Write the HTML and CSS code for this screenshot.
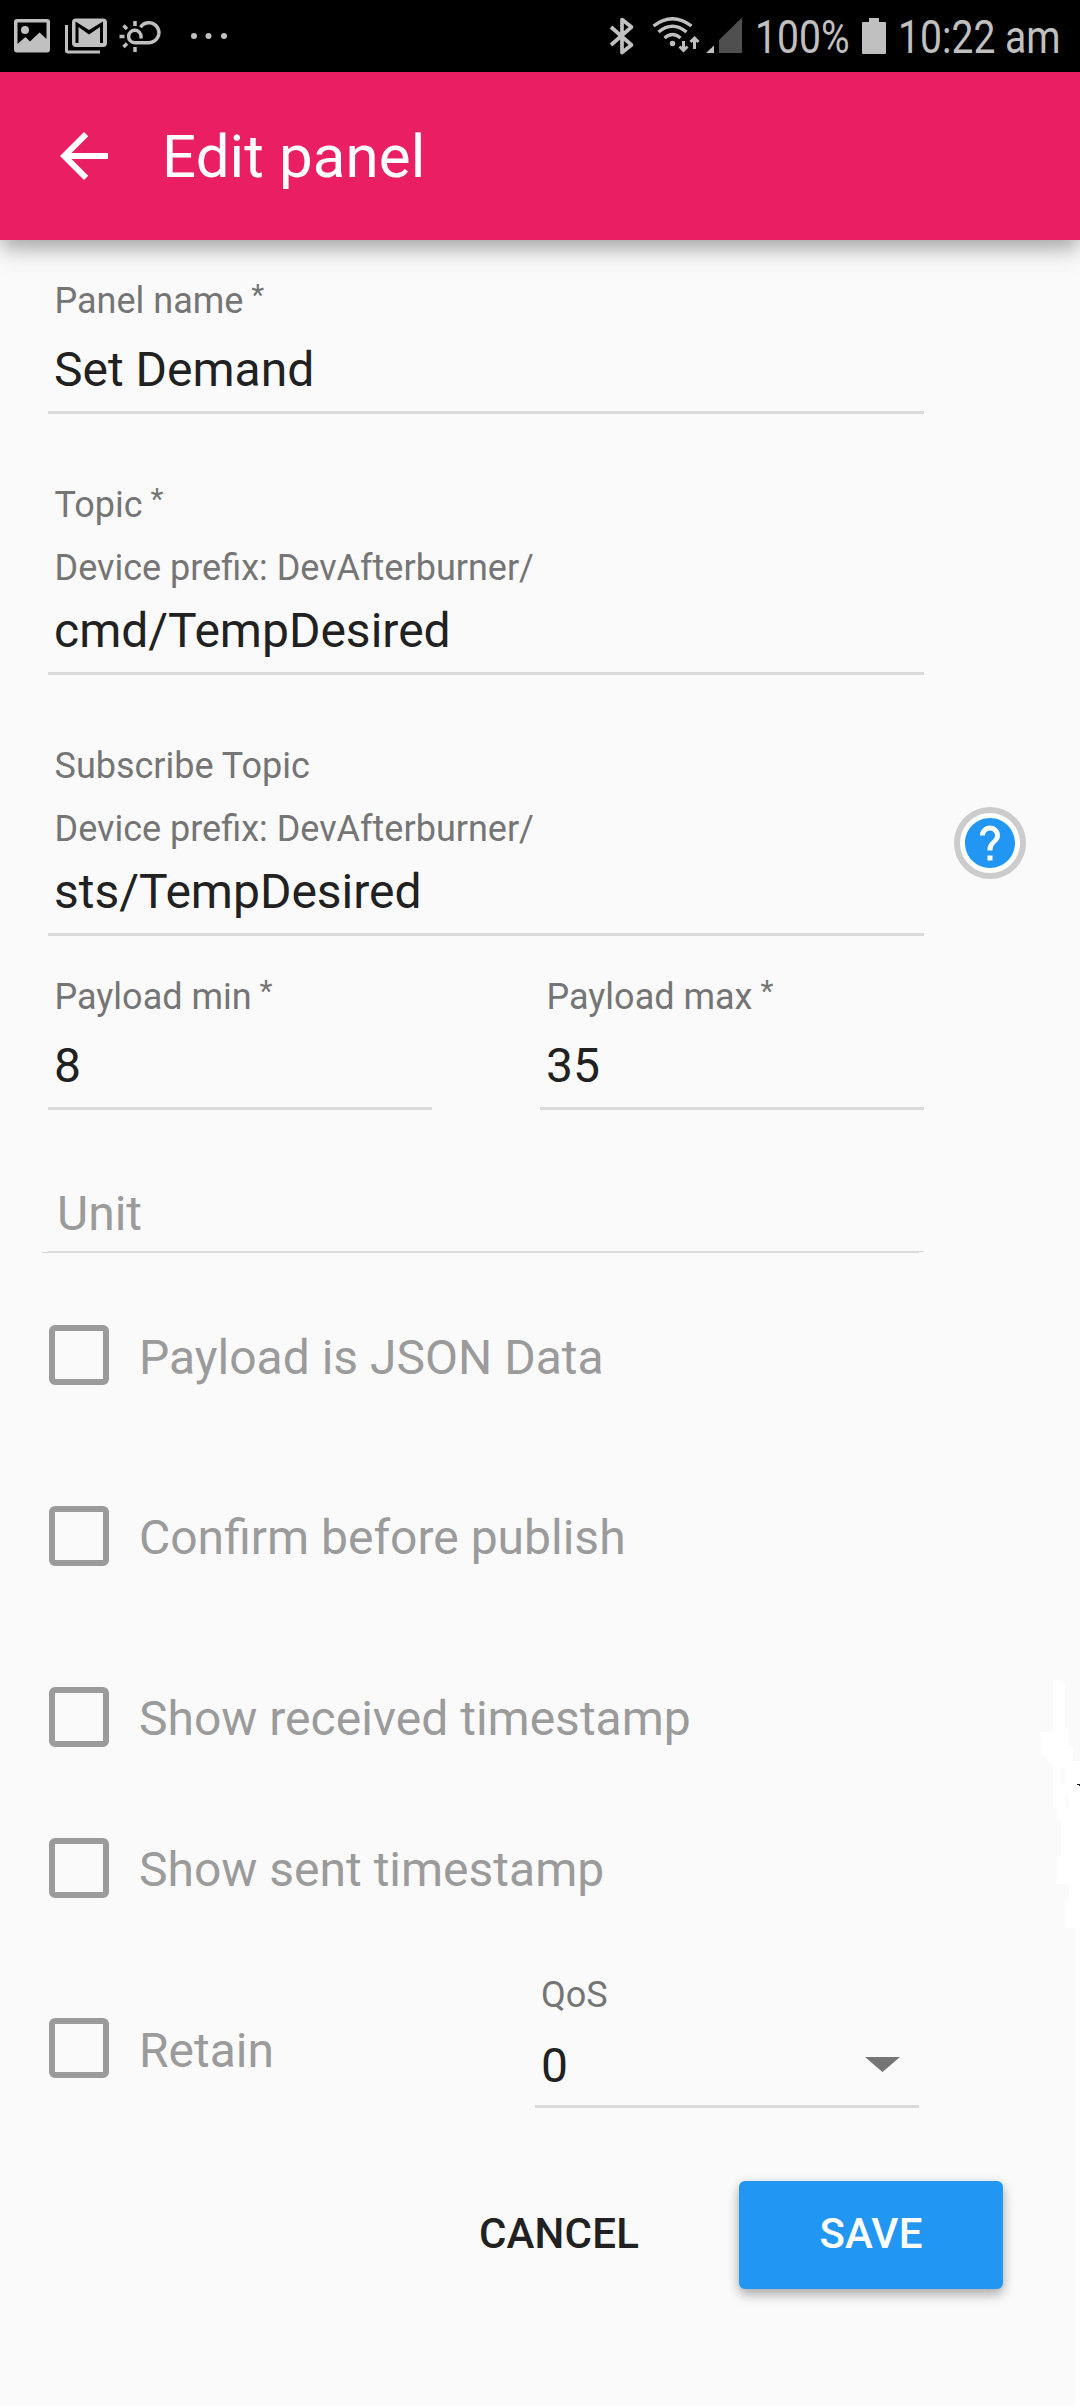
FILE: index.html
```html
<!DOCTYPE html>
<html lang="en">
<head>
<meta charset="utf-8">
<title>Edit panel</title>
<link rel="stylesheet" href="styles.css">
</head>
<body>
<div class="screen">
  <div class="status">
    <svg class="status-left" width="240" height="72" fill="#c0c0c0">
      <path fill-rule="evenodd" d="M17 19h30a3 3 0 0 1 3 3v27.500a3 3 0 0 1-3 3h-30a3 3 0 0 1-3-3v-27.500a3 3 0 0 1 3-3zM17.500 22.500v21.500l8-7 4.500 4.500 9.500-9 7 6.500v-16.500z"/>
      <circle cx="25" cy="30" r="4"/>
      <path d="M65 25h3v25.500h32v3h-32a3 3 0 0 1-3-3z"/>
      <path fill-rule="evenodd" d="M76 18.500h27a4 4 0 0 1 4 4v20.500a4 4 0 0 1-4 4h-27a4 4 0 0 1-4-4v-20.500a4 4 0 0 1 4-4zM75.500 21.500v21.500h3v-16l10.500 7.500 11-7.500v16h3v-21.500l-14 8.500z"/>
      <g fill="none" stroke="#c0c0c0" stroke-width="3.500">
        <path d="M141 38.500V36.500a6.200 6.200 0 1 0-6.200 6.200H149a10 10 0 1 0-8.500-15.500"/>
        <path d="M135 21v5M135 47v5M119.500 36.500h5M123.500 25.500l3.500 3.500M123.500 47l3.500-3.500"/>
      </g>
      <circle cx="194" cy="36" r="3"/><circle cx="208.500" cy="36" r="3"/><circle cx="224" cy="36" r="3"/>
    </svg>
    <div class="status-right">
      <svg width="135" height="72" fill="none" stroke="#c0c0c0">
        <path stroke-width="3.700" stroke-linejoin="round" d="M2 27l20.500 18-9.500 7.500V19.500l9.500 7.500L2 45"/>
        <path stroke-width="3.300" d="M44.500 26q19-14.500 38 0M49.500 32q14-11.500 28 0M55.500 38q8-7 16 0"/>
        <circle cx="63.500" cy="43.500" r="2.700" fill="#c0c0c0" stroke="none"/>
        <path stroke-width="3" d="M74.500 41v9M70.500 46.500l4 4 4-4M85.500 49v-10M81.500 42l4-4 4 4"/>
        <path fill="#c0c0c0" stroke="none" d="M97 53l8-7.500V53z"/>
        <path fill="#4f4f4f" stroke="none" d="M110 53V40L133 17.500V53z"/>
      </svg>
      <span class="percent">100%</span>
      <svg width="24" height="72" fill="#c0c0c0"><path d="M7 18h10v4h6a1 1 0 0 1 1 1v30a1 1 0 0 1-1 1H1a1 1 0 0 1-1-1V23a1 1 0 0 1 1-1h6z"/></svg>
      <span class="clock">10:22 am</span>
    </div>
  </div>
  <header class="appbar">
    <svg width="72" height="72" viewBox="0 0 24 24" fill="#fff"><path d="M20 11H7.830l5.590-5.590L12 4l-8 8 8 8 1.410-1.410L7.830 13H20v-2z"/></svg>
    <h1>Edit panel</h1>
  </header>
  <main class="form">
    <div class="field name">
      <label class="label">Panel name <span class="star">*</span></label>
      <div class="value">Set Demand</div>
    </div>
    <div class="field topic">
      <label class="label">Topic <span class="star">*</span></label>
      <div class="prefix">Device prefix: DevAfterburner/</div>
      <div class="value">cmd/TempDesired</div>
    </div>
    <div class="topic-row">
      <div class="field topic">
        <label class="label">Subscribe Topic</label>
        <div class="prefix">Device prefix: DevAfterburner/</div>
        <div class="value">sts/TempDesired</div>
      </div>
      <div class="help"><svg width="60" height="60" viewBox="0 0 24 24" fill="#2196f3"><path d="M12 2C6.480 2 2 6.480 2 12s4.480 10 10 10 10-4.480 10-10S17.520 2 12 2zm1 17h-2v-2h2v2zm2.070-7.750l-.9.920C13.450 12.900 13 13.500 13 15h-2v-.5c0-1.100.45-2.100 1.170-2.830l1.240-1.260c.37-.36.59-.86.59-1.410 0-1.100-.9-2-2-2s-2 .9-2 2H8c0-2.210 1.790-4 4-4s4 1.790 4 4c0 .88-.36 1.680-.93 2.250z"/></svg></div>
    </div>
    <div class="pair">
      <div class="field">
        <label class="label">Payload min <span class="star">*</span></label>
        <div class="value">8</div>
      </div>
      <div class="field">
        <label class="label">Payload max <span class="star">*</span></label>
        <div class="value">35</div>
      </div>
    </div>
    <div class="unit">
      <span>Unit</span>
      <svg width="882" height="2" fill="#dadada" shape-rendering="crispEdges"><path d="M6 0h876v1h-5v1H0V1h6z"/></svg>
    </div>
    <div class="check json"><i class="box"></i><span>Payload is JSON Data</span></div>
    <div class="check confirm"><i class="box"></i><span>Confirm before publish</span></div>
    <div class="check received"><i class="box"></i><span>Show received timestamp</span></div>
    <div class="check sent"><i class="box"></i><span>Show sent timestamp</span></div>
    <div class="last">
      <div class="check retain"><i class="box"></i><span>Retain</span></div>
      <div class="qos">
        <label class="label">QoS</label>
        <div class="select"><span>0</span><svg width="35" height="15" fill="#757575"><path d="M0 0h35L17.500 15z"/></svg></div>
      </div>
    </div>
    <div class="actions">
      <button class="cancel">CANCEL</button>
      <button class="save">SAVE</button>
    </div>
  </main>
  <svg class="edge" width="42" height="728" shape-rendering="crispEdges">
    <path fill="#fff" d="M15 0h8l4 4v44h4v17l4 4v12h7v647h-5V248H27v-28h4v-16H19v-28h4v-34l-4-4v-10h-4V85l-5-4-3-4H3V52h12z"/>
    <path fill="#fafafa" d="M23 88h4v16h-4zM27 117h4v11h-4z"/>
    <path fill="#222" d="M39 104h3v2h-1v-1h-2z"/>
  </svg>
</div>
</body>
</html>
```
FILE: styles.css
```css
* { box-sizing: border-box; }
body { margin: 0; background: #fafafa; font-family: Roboto, "Liberation Sans", sans-serif; color: #212121; }
svg { display: block; flex: none; }
.screen { position: relative; width: 1080px; height: 2408px; overflow: hidden; border-bottom: 3px solid #fff; }
.status { height: 72px; background: #000; display: flex; justify-content: space-between; color: #c0c0c0; font-size: 46px; }
.status-right { display: flex; align-items: center; width: 471px; white-space: nowrap; }
.percent { width: 104px; margin-left: 11px; margin-right: 3px; }
.percent, .clock { padding-top: 2px; line-height: 72px; transform: scaleX(.85); transform-origin: left; }
.clock { margin-left: 12px; }
.appbar { position: relative; height: 168px; padding-left: 48px; background: #e91e63; display: flex; align-items: center; gap: 42px; box-shadow: 0 12px 15px -3px rgba(0,0,0,.2), 0 6px 30px rgba(0,0,0,.18); }
h1 { margin: 0; padding-top: 2px; color: #fff; font-size: 60px; font-weight: 400; line-height: 72px; letter-spacing: .1px; }
.form { padding: 34px 0 0 48px; }
.field { height: 140px; padding-left: 6px; border-bottom: 3px solid #dadada; display: flex; flex-direction: column; }
.name { width: 876px; }
.label, .prefix { color: #757575; font-size: 36px; line-height: 54px; height: 52px; white-space: pre; flex: none; }
.field .label, .prefix { padding-left: .5px; }
.star { font-size: 30px; line-height: 1; position: relative; top: -8px; left: -1px; }
.value { font-size: 48px; line-height: 60px; margin-top: 14px; }
.topic { width: 876px; height: 197px; margin-top: 64px; }
.prefix { margin-top: 11px; }
.topic .value { margin-top: 8px; }
.topic-row { display: flex; gap: 30px; }
.help { width: 72px; height: 72px; margin-top: 132px; border: 6px solid #ccc; border-radius: 50%; background: #fff; display: flex; align-items: center; justify-content: center; }
.pair { width: 876px; margin-top: 34px; display: grid; grid-template-columns: 1fr 1fr; column-gap: 108px; }
.unit { height: 143px; margin-left: -6px; display: flex; flex-direction: column; justify-content: flex-end; }
.unit span { padding-left: 15px; font-size: 48px; line-height: 60px; color: #9b9b9b; margin-bottom: 7px; }
.check { display: flex; gap: 30px; height: 60px; margin-top: 72px; padding-left: 1px; color: #9b9b9b; font-size: 48px; line-height: 64px; white-space: nowrap; }
.box { width: 60px; height: 60px; border: 6px solid #9b9b9b; border-radius: 6px; flex: none; }
.confirm, .received { margin-top: 121px; }
.sent { margin-top: 91px; }
.last { display: flex; height: 210px; }
.retain { width: 487px; margin-top: 120px; }
.json span, .retain span { padding-top: 1px; }
.qos { width: 384px; padding-top: 70px; }
.qos .label { display: block; padding-left: 6px; }
.select { height: 88px; border-bottom: 3px solid #dadada; padding: 18px 19px 0 6px; display: flex; justify-content: space-between; font-size: 48px; line-height: 56px; }
.select svg { margin-top: 19px; }
.actions { display: flex; justify-content: flex-end; gap: 52px; padding-right: 77px; margin-top: 73px; }
button { height: 108px; padding: 0 0 2px; border: 0; background: none; font: 500 42px/50px Roboto, sans-serif; letter-spacing: .2px; color: #212121; }
.cancel { width: 256px; }
.save { width: 264px; border-radius: 6px; background: #2196f3; color: #fff; box-shadow: 0 6px 12px rgba(0,0,0,.26), 0 2px 12px rgba(0,0,0,.1); }
.edge { position: absolute; left: 1038px; top: 1680px; }
```
